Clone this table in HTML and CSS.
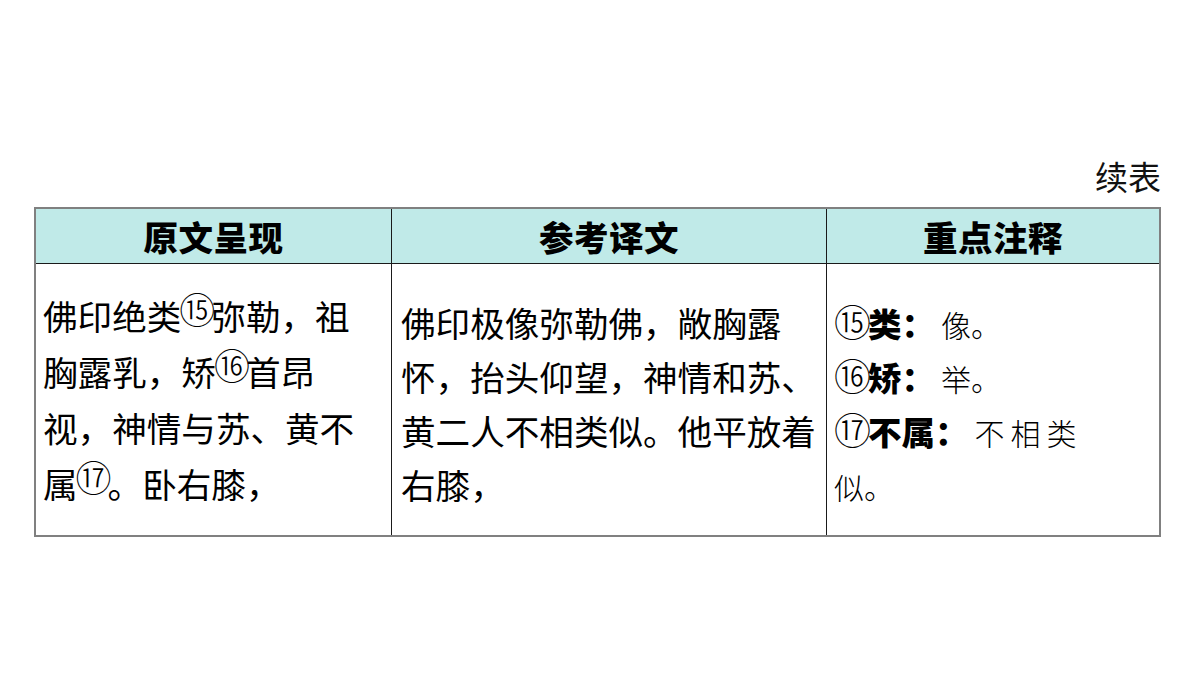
FILE: index.html
```html
<!DOCTYPE html>
<html lang="zh-CN">
<head>
<meta charset="utf-8">
<link rel="stylesheet" href="styles.css">
</head>
<body>
<div class="page">
  <div class="caption">续表</div>
  <div class="table">
    <div class="cell head">原文呈现</div>
    <div class="cell head">参考译文</div>
    <div class="cell head last">重点注释</div>

    <div class="cell body c1">
      <div class="ln">佛印绝类<span class="sup">⑮</span>弥勒，祖</div>
      <div class="ln">胸露乳，矫<span class="sup">⑯</span>首昂</div>
      <div class="ln">视，神情与苏、黄不</div>
      <div class="ln">属<span class="sup">⑰</span>。卧右膝，</div>
    </div>
    <div class="cell body c2">
      <div class="ln">佛印极像弥勒佛，敞胸露</div>
      <div class="ln">怀，抬头仰望，神情和苏、</div>
      <div class="ln">黄二人不相类似。他平放着</div>
      <div class="ln">右膝，</div>
    </div>
    <div class="cell body c3 last">
      <div class="ln"><span class="num">⑮</span><b>类：</b><span class="plain">像。</span></div>
      <div class="ln"><span class="num">⑯</span><b>矫：</b><span class="plain">举。</span></div>
      <div class="ln"><span class="num">⑰</span><b>不属：</b><span class="plain wide">不相类</span></div>
      <div class="ln"><span class="plain first">似。</span></div>
    </div>
  </div>
</div>
</body>
</html>
```

FILE: styles.css
```css
html, body {
  margin: 0;
  padding: 0;
  background: #ffffff;
}

body {
  font-family: "Noto Sans CJK SC", "Noto Sans", sans-serif;
  color: #000;
}

.page {
  width: 1200px;
  height: 675px;
  padding-top: 156px;
  box-sizing: border-box;
}

.caption {
  margin-left: 34px;
  width: 1127px;
  text-align: right;
  font-size: 33px;
  line-height: 40px;
  height: 40px;
  margin-bottom: 11px;
  color: #111;
}

.table {
  margin-left: 34px;
  width: 1127px;
  box-sizing: border-box;
  border: 2px solid #808080;
  display: grid;
  grid-template-columns: 356px 435px 1fr;
  grid-template-rows: 55px 271px;
}

.cell {
  border-right: 1px solid #1a1a1a;
  box-sizing: border-box;
}

.cell.last {
  border-right: none;
}

.head {
  background: #c0eae8;
  border-bottom: 1px solid #1a1a1a;
  display: flex;
  align-items: center;
  justify-content: center;
  font-size: 34.5px;
  font-weight: 900;
  letter-spacing: 0.5px;
}

.body {
  font-size: 34.6px;
  white-space: nowrap;
}

.c1 {
  padding: 23px 0 0 7px;
}

.c1 .ln {
  height: 56px;
  line-height: 56px;
}

.c2,
.c3 {
  padding: 31px 0 0 9px;
}

.c3 {
  padding-left: 7px;
}

.c2 .ln,
.c3 .ln {
  height: 54px;
  line-height: 54px;
}

.ln span,
.ln b {
  line-height: 1;
}

.sup {
  font-family: "Noto Sans CJK SC", sans-serif;
  font-weight: 300;
  font-size: 36px;
  position: relative;
  top: -6px;
  margin: 0 -4px 0 -2px;
}

.num {
  font-family: "Noto Sans CJK SC", sans-serif;
  font-weight: 300;
  font-size: 37px;
  margin: 0 -3px 0 0;
}

.c3 b {
  font-weight: 900;
  font-size: 33.5px;
}

.plain {
  font-weight: 300;
  font-size: 30px;
  margin-left: 6px;
}

.plain.wide {
  letter-spacing: 6px;
}

.plain.first {
  margin-left: 0;
}
```
